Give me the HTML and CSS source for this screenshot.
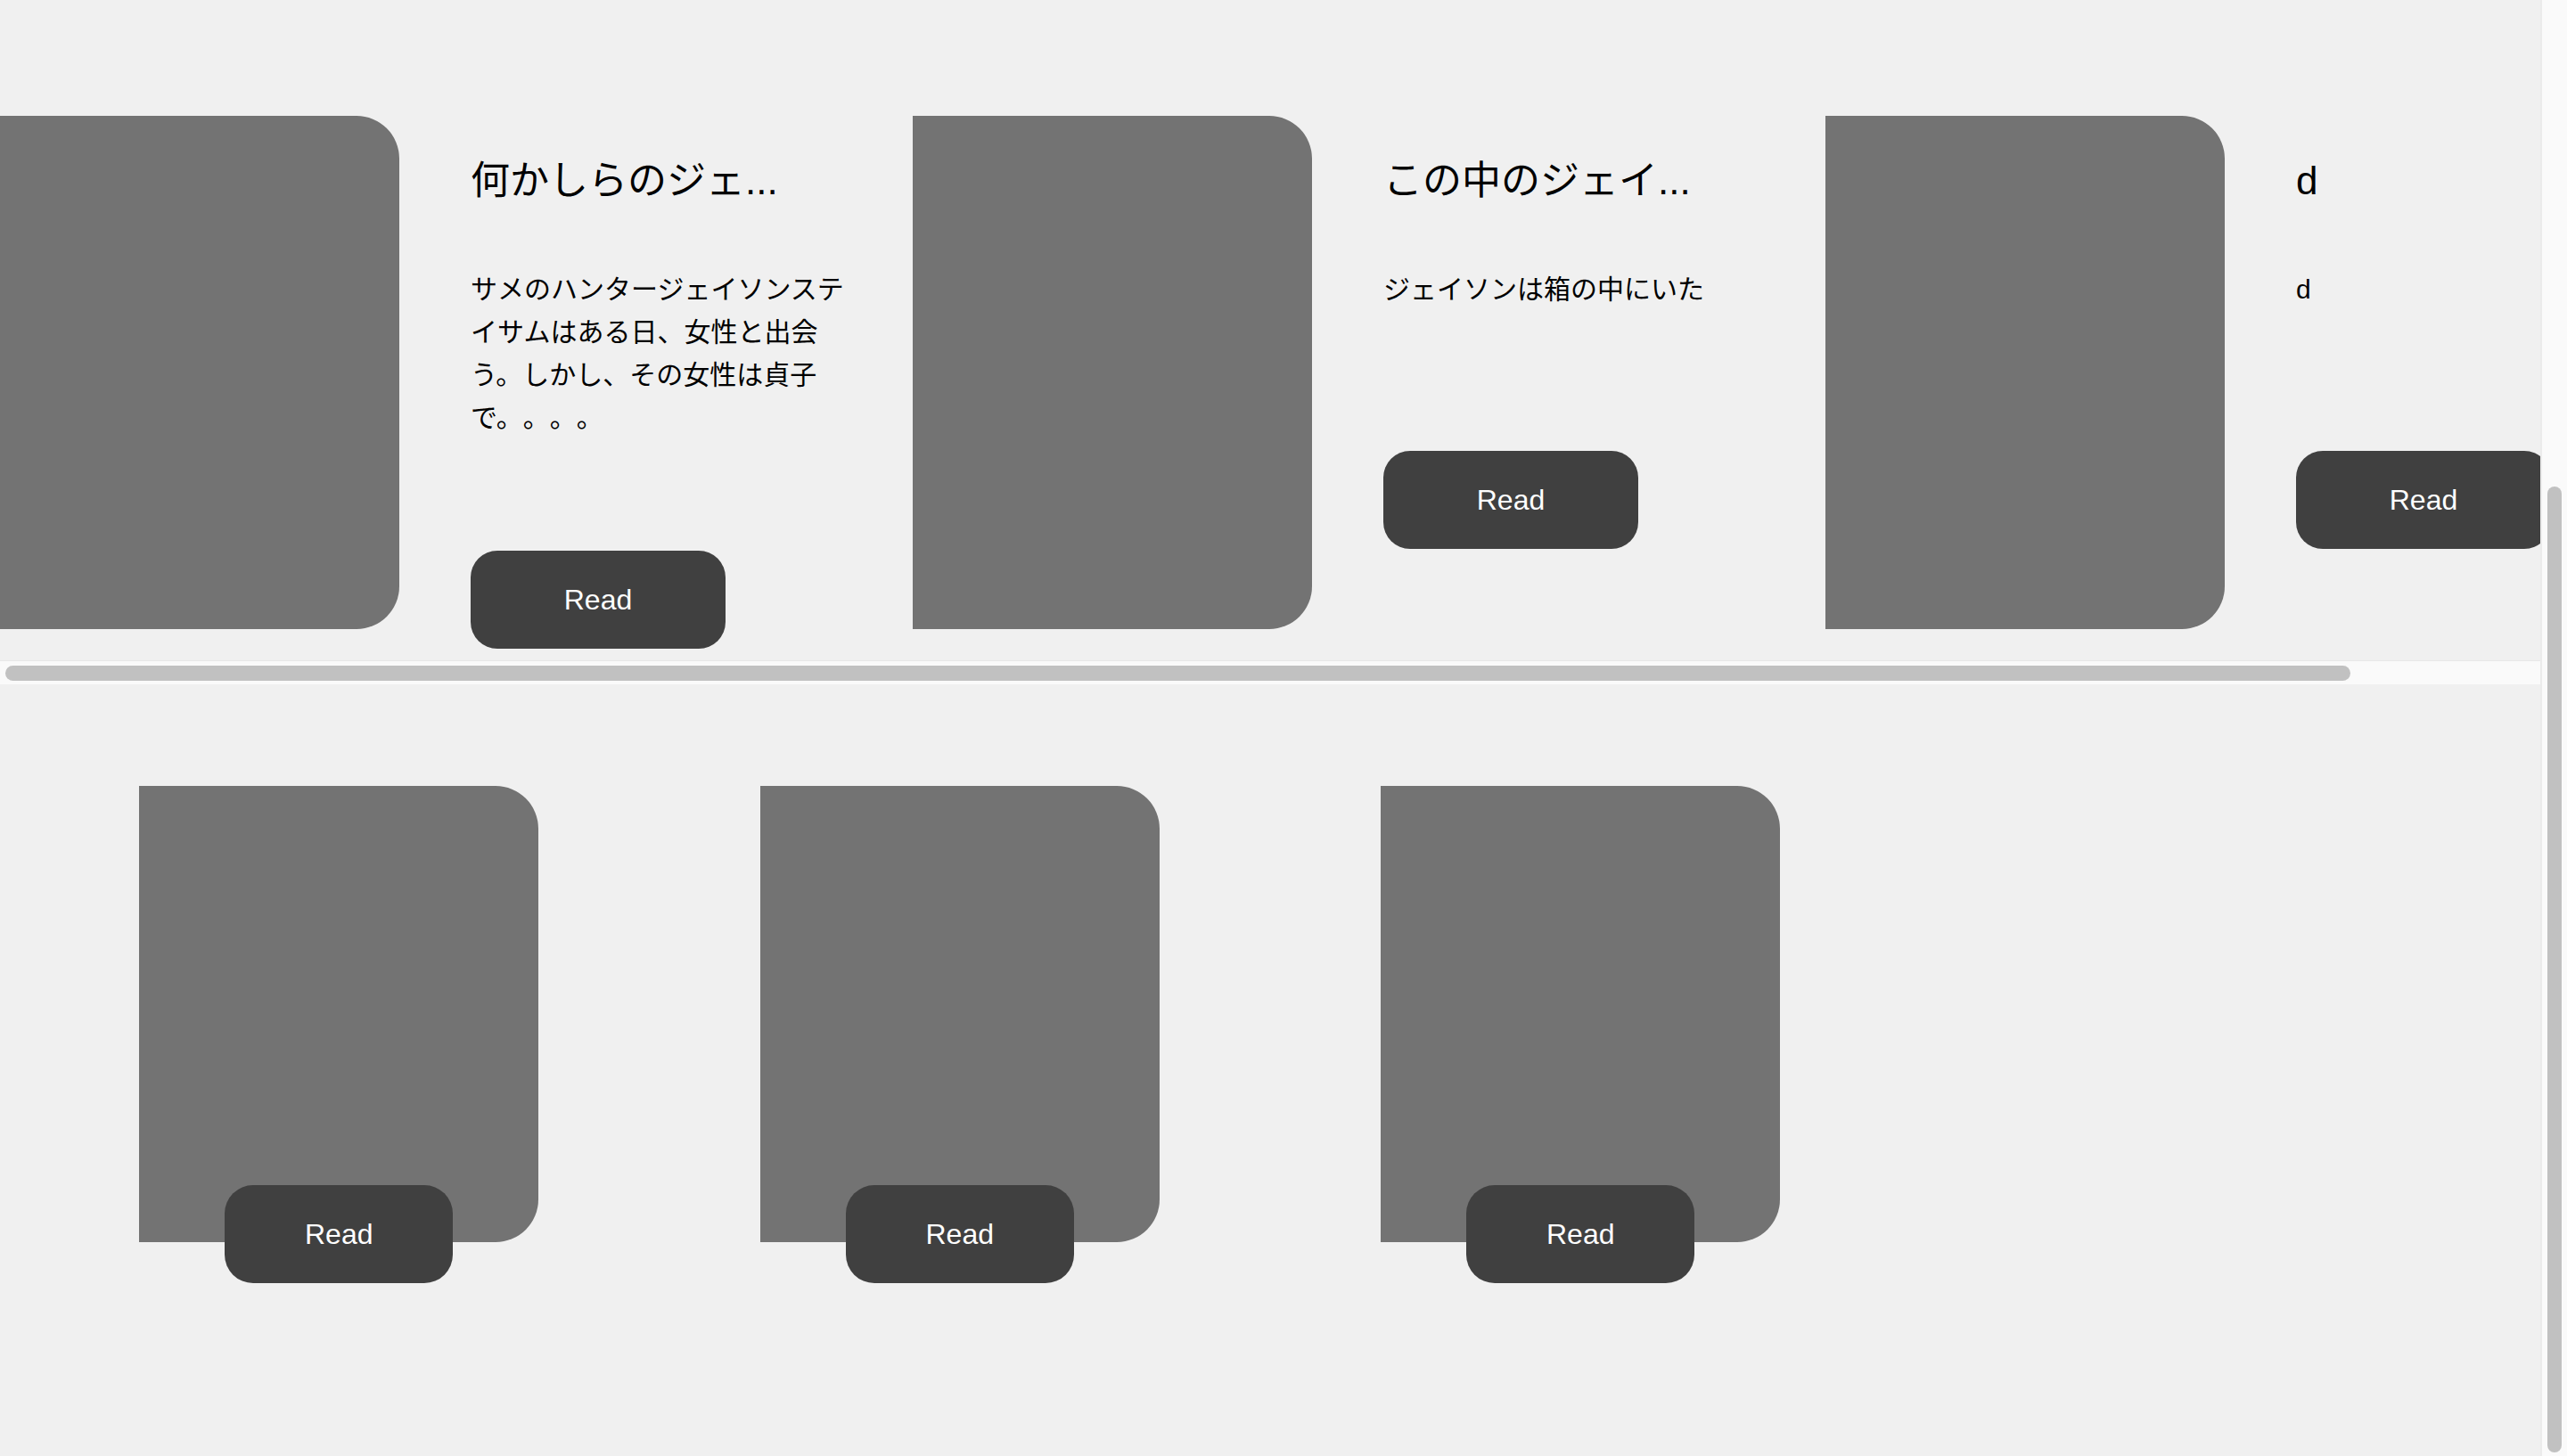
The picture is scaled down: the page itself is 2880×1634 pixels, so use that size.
FILE: index.html
```html
<!DOCTYPE html>
<html lang="ja">
<head>
  <meta charset="UTF-8">
  <title>本棚</title>
  <link rel="stylesheet" href="styles.css">
</head>
<body>
  <main class="page">

    <!-- おすすめ（横スクロール） -->
    <section class="featured">
      <div class="book">
        <div class="cover"></div>
        <div class="info">
          <h2>何かしらのジェ...</h2>
          <p>サメのハンタージェイソンステイサムはある日、女性と出会う。しかし、その女性は貞子で。。。。</p>
          <button class="btn">Read</button>
        </div>
      </div>
      <div class="book">
        <div class="cover"></div>
        <div class="info">
          <h2>この中のジェイ...</h2>
          <p>ジェイソンは箱の中にいた</p>
          <button class="btn">Read</button>
        </div>
      </div>
      <div class="book">
        <div class="cover"></div>
        <div class="info">
          <h2>d</h2>
          <p>d</p>
          <button class="btn">Read</button>
        </div>
      </div>
    </section>
    <div class="hbar"><div class="hbar-thumb"></div></div>

    <!-- ライブラリ -->
    <section class="library">
      <div class="tile">
        <div class="cover cover-small"></div>
        <button class="btn btn-small">Read</button>
      </div>
      <div class="tile">
        <div class="cover cover-small"></div>
        <button class="btn btn-small">Read</button>
      </div>
      <div class="tile">
        <div class="cover cover-small"></div>
        <button class="btn btn-small">Read</button>
      </div>
    </section>

  </main>
  <div class="vbar"><div class="vbar-thumb"></div></div>
</body>
</html>
```

FILE: styles.css
```css
body {
  margin: 0;
  height: 100vh;
  overflow: hidden;
  display: flex;
  background-color: #f0f0f0;
  color: #000;
  font-family: "Liberation Sans", "Noto Sans CJK JP", sans-serif;
}

.page {
  flex: 1;
  min-width: 0;
}

/* scrollbars (drawn, the browser hides its own) */
.vbar {
  width: 30px;
  box-sizing: border-box;
  padding: 546px 6px 4px;
  border-left: 2px solid #ebebeb;
  background-color: #fafafa;
  display: flex;
}

.vbar-thumb {
  flex: 1;
  border-radius: 8px;
  background-color: #c1c1c1;
}

.hbar {
  height: 27px;
  box-sizing: border-box;
  padding: 5px 0 4px 6px;
  border-top: 1px solid #e8e8e8;
  background-color: #fafafa;
}

.hbar-thumb {
  width: 2631px;
  height: 100%;
  border-radius: 9px;
  background-color: #c1c1c1;
}

.featured {
  display: flex;
  align-items: flex-start;
  overflow: hidden;
  padding: 130px 0 13px;
}

.book {
  display: flex;
  align-items: flex-start;
  gap: 80px;
  flex-shrink: 0;
  margin-right: 48px;
}

.cover {
  width: 448px;
  height: 576px;
  flex-shrink: 0;
  background-color: #737373;
  border-radius: 0 48px 48px 0;
}

.info {
  width: 448px;
}

.info h2 {
  margin: 40px 0 0;
  font-size: 44px;
  font-weight: normal;
  line-height: 66px;
  white-space: nowrap;
}

.info p {
  width: 430px;
  margin: 65px 0 0;
  min-height: 80px;
  font-size: 30px;
  line-height: 48px;
  text-spacing-trim: space-all;
}

.btn {
  display: block;
  margin-top: 125px;
  width: 286px;
  height: 110px;
  padding: 0;
  border: none;
  border-radius: 30px;
  background-color: #404040;
  color: #fff;
  font-family: inherit;
  font-size: 32px;
  cursor: pointer;
}

.library {
  display: grid;
  grid-template-columns: repeat(4, 1fr);
  justify-items: center;
  padding: 114px 32px 0;
}

.tile {
  display: flex;
  flex-direction: column;
  align-items: center;
}

.cover-small {
  height: 512px;
}

.btn-small {
  margin-top: -64px;
  width: 256px;
  border-radius: 32px;
}
```
